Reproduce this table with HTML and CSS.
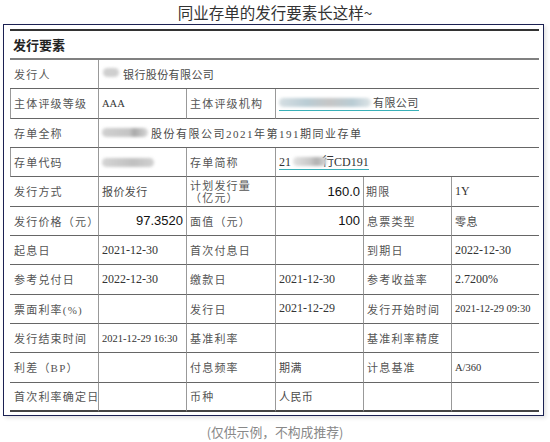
FILE: index.html
```html
<!DOCTYPE html>
<html lang="zh">
<head>
<meta charset="utf-8">
<title>发行要素</title>
<link rel="stylesheet" href="styles.css">
</head>
<body>
<div class="title">同业存单的发行要素长这样~</div>
<div class="box">
  <div class="head">发行要素</div>
  <div class="grid">
    <div class="c lab">发行人</div>
    <div class="c val s5"><span class="blur b1"></span>银行股份有限公司</div>

    <div class="c lab">主体评级等级</div>
    <div class="c val sm">AAA</div>
    <div class="c lab">主体评级机构</div>
    <div class="c val s3"><span class="link"><span class="blur b2"></span>有限公司</span></div>

    <div class="c lab">存单全称</div>
    <div class="c val s5 wide"><span class="blur b3"></span>股份有限公司2021年第191期同业存单</div>

    <div class="c lab">存单代码</div>
    <div class="c val"><span class="blur b4"></span></div>
    <div class="c lab">存单简称</div>
    <div class="c val s3 d"><span class="link">21<span class="blur b5"></span>行CD191</span></div>

    <div class="c lab">发行方式</div>
    <div class="c val">报价发行</div>
    <div class="c lab two">计划发行量<br>（亿元）</div>
    <div class="c num">160.0</div>
    <div class="c lab tight">期限</div>
    <div class="c val d">1Y</div>

    <div class="c lab">发行价格（元）</div>
    <div class="c num">97.3520</div>
    <div class="c lab">面值（元）</div>
    <div class="c num">100</div>
    <div class="c lab">息票类型</div>
    <div class="c val">零息</div>

    <div class="c lab">起息日</div>
    <div class="c val d">2021-12-30</div>
    <div class="c lab">首次付息日</div>
    <div class="c val"></div>
    <div class="c lab">到期日</div>
    <div class="c val d">2022-12-30</div>

    <div class="c lab">参考兑付日</div>
    <div class="c val d">2022-12-30</div>
    <div class="c lab">缴款日</div>
    <div class="c val d">2021-12-30</div>
    <div class="c lab">参考收益率</div>
    <div class="c val d">2.7200%</div>

    <div class="c lab">票面利率(%)</div>
    <div class="c val"></div>
    <div class="c lab">发行日</div>
    <div class="c val d">2021-12-29</div>
    <div class="c lab">发行开始时间</div>
    <div class="c val sm">2021-12-29 09:30</div>

    <div class="c lab">发行结束时间</div>
    <div class="c val sm">2021-12-29 16:30</div>
    <div class="c lab">基准利率</div>
    <div class="c val"></div>
    <div class="c lab">基准利率精度</div>
    <div class="c val"></div>

    <div class="c lab">利差（BP）</div>
    <div class="c val"></div>
    <div class="c lab">付息频率</div>
    <div class="c val">期满</div>
    <div class="c lab">计息基准</div>
    <div class="c val sm">A/360</div>

    <div class="c lab last">首次利率确定日</div>
    <div class="c val last"></div>
    <div class="c lab last">币种</div>
    <div class="c val last">人民币</div>
    <div class="c lab last"></div>
    <div class="c val last"></div>
  </div>
</div>
<div class="foot">(仅供示例，不构成推荐)</div>
</body>
</html>
```
FILE: styles.css
```css
html, body {
  margin: 0;
  padding: 0;
  background: #fff;
}
body {
  width: 550px;
  font-family: "Noto Sans CJK SC", "Noto Sans", sans-serif;
}
.title {
  height: 24px;
  line-height: 24px;
  text-align: center;
  font-size: 15.5px;
  color: #333;
}
.box {
  margin-left: 3px;
  width: 529px;
  border: 1px solid #1b2152;
  padding: 4px 4px 3px 6px;
  box-shadow: 2px 2px 4px rgba(0, 0, 0, 0.12);
}
.head {
  height: 27px;
  border-top: 2px solid #333;
  border-bottom: 2px solid #808080;
  display: flex;
  align-items: center;
  padding-left: 3px;
  font-size: 13px;
  font-weight: bold;
  color: #222;
}
.grid {
  display: grid;
  grid-template-columns: 88px 88px 89px 88px 88px 88px;
  grid-auto-rows: 29.33px;
}
.c {
  box-sizing: border-box;
  border-bottom: 1px solid #666;
  border-left: 1px solid #999;
  display: flex;
  align-items: center;
  padding: 0 3px 0 3px;
  overflow: hidden;
  white-space: nowrap;
  font-family: "Liberation Serif", "Noto Sans CJK SC", serif;
  font-size: 11px;
  color: #555;
}
.grid > .c:first-child,
.lab.first,
.c:nth-child(6n+1) {
  border-left: none;
  padding-left: 4px;
}
.lab {
  letter-spacing: 1.2px;
}
.val {
  font-size: 11px;
  letter-spacing: 0.4px;
  color: #4a4a4a;
}
.val.wide {
  letter-spacing: 1.5px;
}
.val.d {
  font-size: 12px;
  letter-spacing: 0;
  color: #333;
}
.val.sm {
  font-size: 10.5px;
  letter-spacing: 0;
  color: #333;
}
.s5 { grid-column: span 5; }
.s3 { grid-column: span 3; }
.two {
  white-space: normal;
  line-height: 12px;
  padding-top: 1px;
}
.tight { padding-left: 2px; }
.num {
  justify-content: flex-end;
  padding-right: 3px;
  font-family: "Liberation Sans", Arial, sans-serif;
  font-size: 13px;
  color: #111;
}
.last {
  border-bottom: 2px solid #444;
}
.link {
  display: inline-flex;
  align-items: center;
  border-bottom: 1px solid #3ab0b8;
  line-height: 14px;
}
.blur {
  display: inline-block;
  height: 9px;
  border-radius: 5px;
  background: #c9c9c9;
  filter: blur(1.6px);
}
.b1 { width: 16px; margin: -4px 4px 0 1px; background: #cfcfcf; }
.b2 { width: 92px; margin-right: 2px; background: linear-gradient(90deg, #d6dfe3, #b9ccd4 30%, #c6c6c6 55%, #b9ccd4 80%, #dde4e6); }
.b3 { width: 46px; margin-right: 3px; background: linear-gradient(90deg, #d0d0d0, #c4c4c4 60%, #a8a8a8 70%, #d8d8d8); }
.b4 { width: 52px; background: linear-gradient(90deg, #d4d4d4, #c0c0c0 60%, #d0d0d0); }
.b5 { width: 34px; margin: 0 -5px 0 2px; position: relative; z-index: 1; background: linear-gradient(90deg, #e2e2e2, #c8c8c8 50%, #b0b0b0 70%, #dddddd); }
.foot {
  margin-top: 8px;
  text-align: center;
  font-size: 12.8px;
  line-height: 16px;
  color: #888;
}
```
